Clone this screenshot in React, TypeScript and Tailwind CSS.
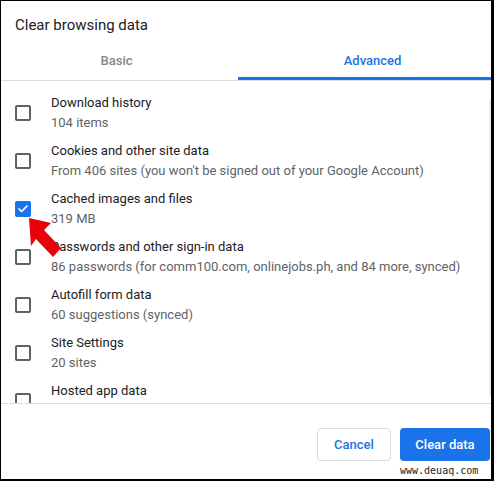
import { Check } from 'lucide-react';

const items = [
  { title: 'Download history', sub: '104 items', checked: false },
  { title: 'Cookies and other site data', sub: "From 406 sites (you won't be signed out of your Google Account)", checked: false },
  { title: 'Cached images and files', sub: '319 MB', checked: true },
  { title: 'Passwords and other sign-in data', sub: '86 passwords (for comm100.com, onlinejobs.ph, and 84 more, synced)', checked: false },
  { title: 'Autofill form data', sub: '60 suggestions (synced)', checked: false },
  { title: 'Site Settings', sub: '20 sites', checked: false },
  { title: 'Hosted app data', sub: '', checked: false },
];

const Box = ({ checked }: { checked: boolean }) => (checked ? (
  <div className="flex h-4 w-4 items-center justify-center rounded-[2px] bg-[#1a73e8]">
    <Check size={12} strokeWidth={3.5} className="text-white" />
  </div>
) : (
  <div className="h-4 w-4 rounded-[2px] border-2 border-[#5f6368]" />
));

const App = () => (
  <div className="relative flex h-[481px] w-[494px] flex-col overflow-hidden border-b-2 border-l border-r-[3px] border-t border-black bg-white font-['Roboto',sans-serif]">
    <div className="flex h-[45px] items-center pl-[14px] pt-[3px] text-[15px] text-[#202124]">Clear browsing data</div>
    <div className="flex h-[35px] border-b border-[#dadce0] text-[13px] font-medium">
      <div className="flex w-[237px] items-center justify-center pb-[4px] pr-[6px] text-[#80868b]">Basic</div>
      <div className="flex flex-1 items-center justify-center border-b-[3px] border-[#1a73e8] pb-[1px] pl-[16px] text-[#1a73e8]">Advanced</div>
    </div>
    <div className="relative h-[323px] overflow-hidden border-b border-[#dadce0] pt-[12px]">
      {items.map((it) => (
        <div key={it.title} className="flex h-[48px] items-start">
          <div className="flex h-[40px] w-[50px] items-center pl-[14px]">
            <Box checked={it.checked} />
          </div>
          <div className="text-[13px] leading-[20px]">
            <div className="text-[#202124]">{it.title}</div>
            <div className="text-[#5f6368]">{it.sub}</div>
          </div>
        </div>
      ))}
      <div className="absolute right-0 top-[18px] h-[296px] w-[2px] bg-[#ececec]" />
    </div>
    <div className="flex flex-1 items-start justify-end gap-[9px] pr-[1px] pt-[24px]">
      <button type="button" className="h-[33px] w-[74px] rounded-[4px] border border-[#dadce0] text-[13px] font-medium text-[#1a73e8]">Cancel</button>
      <button type="button" className="h-[33px] w-[90px] rounded-[4px] bg-[#1a73e8] text-[13px] font-medium text-white">Clear data</button>
    </div>
    <div className="absolute bottom-[2px] left-[399px] font-['DejaVu_Sans_Mono',monospace] text-[10px] leading-[12px] text-[#222]">www.deuaq.com</div>
    <svg className="absolute left-0 top-0" width="494" height="481" viewBox="0 0 494 481">
      <polygon points="28,217 50,222 43,229 60,247 52,256 35,238 30,245" fill="#e8000b" />
    </svg>
  </div>
);

export default App;
